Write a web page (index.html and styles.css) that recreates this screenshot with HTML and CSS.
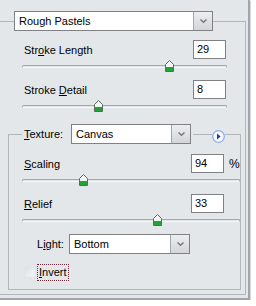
FILE: index.html
```html
<!DOCTYPE html>
<html>
<head>
<meta charset="utf-8">
<link rel="stylesheet" href="styles.css">
</head>
<body>
<div class="panel">
  <fieldset class="group outer">
    <legend class="outer-legend">
      <div class="select sel-main"><span class="sel-val">Rough Pastels</span><span class="sel-btn"><svg width="9" height="6" viewBox="0 0 9 6"><path d="M1.5 1.5 L4.5 4.2 L7.5 1.5" fill="none" stroke="#75797e" stroke-width="1.5"/></svg></span></div>
    </legend>
    <div class="content outer-content">
      <div class="row"><span class="label">Str<u>o</u>ke Length</span><span class="num">29</span></div>
      <div class="slider"><div class="track"></div><span class="thumb" style="left:143px"><svg width="9" height="12" viewBox="0 0 9 12"><path d="M4.5 0.5 L8.5 4.5 V11.5 H0.5 V4.5 Z" fill="#f4f6f4" stroke="#5c6a5c"/><path d="M1 7 H8 V11 H1 Z" fill="#22a33a"/></svg></span></div>
      <div class="row"><span class="label">Stroke <u>D</u>etail</span><span class="num">8</span></div>
      <div class="slider"><div class="track"></div><span class="thumb" style="left:72px"><svg width="9" height="12" viewBox="0 0 9 12"><path d="M4.5 0.5 L8.5 4.5 V11.5 H0.5 V4.5 Z" fill="#f4f6f4" stroke="#5c6a5c"/><path d="M1 7 H8 V11 H1 Z" fill="#22a33a"/></svg></span></div>

      <fieldset class="group texture">
        <legend class="tex-legend">
          <span class="label"><u>T</u>exture:</span>
          <div class="select sel-tex"><span class="sel-val">Canvas</span><span class="sel-btn"><svg width="9" height="6" viewBox="0 0 9 6"><path d="M1.5 1.5 L4.5 4.2 L7.5 1.5" fill="none" stroke="#75797e" stroke-width="1.5"/></svg></span></div>
        </legend>
        <span class="info-btn"><svg width="13" height="13" viewBox="0 0 13 13"><circle cx="6.5" cy="6.5" r="5.8" fill="#f7f9fd" stroke="#8eaee6" stroke-width="1.3"/><path d="M5 3.6 L8.6 6.5 L5 9.4 Z" fill="#1a3a9c"/></svg></span>
        <div class="content tex-content">
          <div class="row"><span class="label"><u>S</u>caling</span><span class="num">94</span><span class="unit">%</span></div>
          <div class="slider"><div class="track"></div><span class="thumb" style="left:57px"><svg width="9" height="12" viewBox="0 0 9 12"><path d="M4.5 0.5 L8.5 4.5 V11.5 H0.5 V4.5 Z" fill="#f4f6f4" stroke="#5c6a5c"/><path d="M1 7 H8 V11 H1 Z" fill="#22a33a"/></svg></span></div>
          <div class="row"><span class="label"><u>R</u>elief</span><span class="num">33</span><span class="unit"></span></div>
          <div class="slider"><div class="track"></div><span class="thumb" style="left:131px"><svg width="9" height="12" viewBox="0 0 9 12"><path d="M4.5 0.5 L8.5 4.5 V11.5 H0.5 V4.5 Z" fill="#f4f6f4" stroke="#5c6a5c"/><path d="M1 7 H8 V11 H1 Z" fill="#22a33a"/></svg></span></div>
          <div class="light-row">
            <span class="label">L<u>i</u>ght:</span>
            <div class="select sel-light"><span class="sel-val">Bottom</span><span class="sel-btn"><svg width="9" height="6" viewBox="0 0 9 6"><path d="M1.5 1.5 L4.5 4.2 L7.5 1.5" fill="none" stroke="#75797e" stroke-width="1.5"/></svg></span></div>
          </div>
          <div class="check-row">
            <span class="checkbox"></span>
            <span class="check-label"><u>I</u>nvert</span>
          </div>
        </div>
      </fieldset>
    </div>
  </fieldset>
</div>
</body>
</html>
```
FILE: styles.css
```css
html, body {
  margin: 0;
  padding: 0;
  background: #ffffff;
}
body {
  font-family: "Liberation Sans", Arial, sans-serif;
  font-size: 11px;
  color: #000;
}
.panel {
  box-sizing: border-box;
  width: 250px;
  height: 300px;
  padding-top: 11px;
  background: #e4e7ea;
  border-right: 2px solid #a2a6aa;
  border-bottom: 2px solid #a2a6aa;
  box-shadow: 1px 1px 0 #d6d8da;
}
.group {
  margin: 0;
  padding: 0;
  min-width: 0;
  border: 1px solid #b2b6ba;
}
.outer {
  box-sizing: border-box;
  width: 246px;
  height: 284px;
  border-left: 0;
}
.outer-legend {
  margin-left: 14px;
  padding: 0;
}
.select {
  box-sizing: border-box;
  display: flex;
  height: 20px;
  background: #fff;
  border: 1px solid #7f8185;
}
.sel-val {
  flex: 1;
  padding-left: 4px;
  line-height: 18px;
  white-space: nowrap;
  overflow: hidden;
}
.sel-btn {
  width: 18px;
  display: flex;
  align-items: center;
  justify-content: center;
  background: linear-gradient(#eceef0, #d2d5d9);
  border-left: 1px solid #a3a6aa;
}
.sel-main { width: 199px; }
.content {
  display: flex;
  flex-direction: column;
}
.outer-content {
  padding: 9px 19px 0 24px;
}
.row {
  display: flex;
  align-items: center;
  height: 19px;
}
.label {
  flex: 1;
  white-space: nowrap;
}
.num {
  box-sizing: border-box;
  width: 33px;
  height: 19px;
  background: #fff;
  border: 1px solid #7f8185;
  padding-left: 3px;
  line-height: 17px;
}
.unit {
  width: 16px;
  padding-left: 5px;
  box-sizing: border-box;
  font-size: 12px;
}
.slider {
  position: relative;
  height: 21px;
  margin-left: -2px;
  margin-right: -1px;
}
.track {
  box-sizing: border-box;
  position: absolute;
  left: 0;
  right: 0;
  top: 6px;
  height: 3px;
  border: 1px solid #a6aaae;
  border-bottom-color: #f7f8f9;
  border-radius: 2px;
  background: #dfe2e5;
}
.thumb {
  position: absolute;
  top: 1px;
  width: 9px;
  height: 12px;
  display: block;
}
.thumb svg { display: block; }
.texture {
  box-sizing: border-box;
  position: relative;
  margin: 4px -15px 0 -16px;
  height: 166px;
}
.tex-legend {
  margin-left: 13px;
  padding: 0 2px;
  display: flex;
  align-items: center;
  background: #e4e7ea;
}
.tex-legend .label {
  flex: none;
  width: 47px;
}
.sel-tex { width: 120px; }
.info-btn {
  position: absolute;
  left: 203px;
  top: -14px;
  width: 13px;
  height: 13px;
  background: #e4e7ea;
}
.info-btn svg { display: block; }
.tex-content {
  padding: 10px 0 0 15px;
}
.tex-content .slider {
  margin-right: 0;
}
.light-row {
  display: flex;
  align-items: center;
  height: 20px;
  padding-left: 13px;
}
.light-row .label {
  flex: none;
  width: 32px;
}
.sel-light { width: 121px; }
.check-row {
  display: flex;
  align-items: center;
  margin-top: 10px;
  height: 16px;
}
.checkbox {
  box-sizing: border-box;
  width: 12px;
  height: 12px;
  background: linear-gradient(135deg, #d9dee6, #f6f7f9);
  border: 1px solid #e0e3e8;
}
.check-label {
  margin-left: 2px;
  padding: 0 1px 1px 1px;
  outline: 1px dotted #6d2a38;
  line-height: 14px;
}
```
